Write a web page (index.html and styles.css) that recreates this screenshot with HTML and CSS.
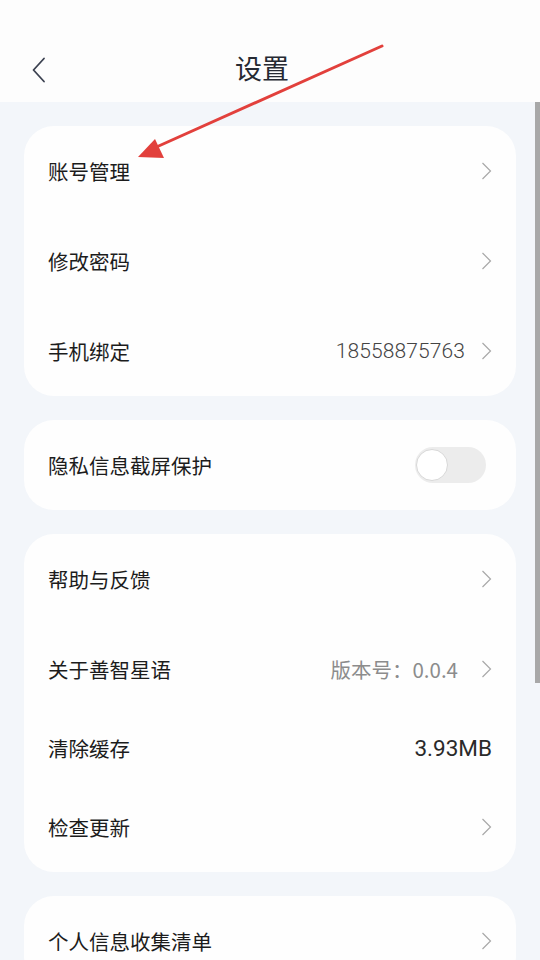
FILE: index.html
```html
<!DOCTYPE html>
<html lang="zh-CN">
<head>
    <meta charset="UTF-8">
    <meta name="viewport" content="width=device-width, initial-scale=1.0">
    <title>设置</title>
    <link rel="stylesheet" href="styles.css">
</head>
<body>
    <header class="top">
        <div class="bar">
            <svg class="back" width="16" height="26" viewBox="0 0 16 26">
                <path d="M13 1.5 L2.5 13 L13 24.5" fill="none" stroke="#3b4150" stroke-width="1.8" stroke-linecap="round" stroke-linejoin="round"/>
            </svg>
            <h1>设置</h1>
        </div>
    </header>
    <main class="list">
        <section class="card">
            <div class="row"><span class="label">账号管理</span><svg class="chev" width="11" height="18" viewBox="0 0 11 18"><path d="M1.5 1 L9.5 9 L1.5 17" fill="none" stroke="#a8a8a8" stroke-width="1.2"/></svg></div>
            <div class="row"><span class="label">修改密码</span><svg class="chev" width="11" height="18" viewBox="0 0 11 18"><path d="M1.5 1 L9.5 9 L1.5 17" fill="none" stroke="#a8a8a8" stroke-width="1.2"/></svg></div>
            <div class="row"><span class="label">手机绑定</span><span class="value num">18558875763</span><svg class="chev" width="11" height="18" viewBox="0 0 11 18"><path d="M1.5 1 L9.5 9 L1.5 17" fill="none" stroke="#a8a8a8" stroke-width="1.2"/></svg></div>
        </section>
        <section class="card">
            <div class="row"><span class="label">隐私信息截屏保护</span><span class="switch"><span class="knob"></span></span></div>
        </section>
        <section class="card">
            <div class="row"><span class="label">帮助与反馈</span><svg class="chev" width="11" height="18" viewBox="0 0 11 18"><path d="M1.5 1 L9.5 9 L1.5 17" fill="none" stroke="#a8a8a8" stroke-width="1.2"/></svg></div>
            <div class="row"><span class="label">关于善智星语</span><span class="value ver">版本号：0.0.4</span><svg class="chev" width="11" height="18" viewBox="0 0 11 18"><path d="M1.5 1 L9.5 9 L1.5 17" fill="none" stroke="#a8a8a8" stroke-width="1.2"/></svg></div>
            <div class="row short"><span class="label">清除缓存</span><span class="value size">3.93MB</span></div>
            <div class="row"><span class="label">检查更新</span><svg class="chev" width="11" height="18" viewBox="0 0 11 18"><path d="M1.5 1 L9.5 9 L1.5 17" fill="none" stroke="#a8a8a8" stroke-width="1.2"/></svg></div>
        </section>
        <section class="card">
            <div class="row"><span class="label">个人信息收集清单</span><svg class="chev" width="11" height="18" viewBox="0 0 11 18"><path d="M1.5 1 L9.5 9 L1.5 17" fill="none" stroke="#a8a8a8" stroke-width="1.2"/></svg></div>
        </section>
    </main>
    <div class="scroll"></div>
    <svg class="arrow" width="540" height="200" viewBox="0 0 540 200">
        <line x1="382" y1="46" x2="152" y2="149" stroke="#e2403c" stroke-width="3" stroke-linecap="round"/>
        <polygon points="138,157 155,139 164,158" fill="#e2403c"/>
    </svg>
</body>
</html>
```

FILE: styles.css
```css
html {
    font-family: "Noto Sans CJK SC", "Noto Sans", sans-serif;
}
body {
    margin: 0;
    background: #f3f6fa;
    color: #1c1c1c;
    position: relative;
    height: 960px;
    overflow: hidden;
}
.top {
    background: #fdfdfd;
    padding-top: 36px;
}
.bar {
    height: 66px;
    display: flex;
    align-items: center;
    justify-content: center;
    padding-right: 16px;
    position: relative;
}
.back {
    position: absolute;
    left: 31px;
    top: 21px;
}
h1 {
    margin: 0;
    font-size: 27px;
    font-weight: 400;
    color: #262a33;
    line-height: 1;
    position: relative;
    top: -2px;
}
.list {
    padding: 24px 24px 0;
    display: flex;
    flex-direction: column;
    gap: 24px;
}
.card {
    background: #fefefe;
    border-radius: 30px;
    padding: 0 24px;
}
.row {
    height: 90px;
    display: flex;
    align-items: center;
    font-size: 20.5px;
}
.row.short {
    height: 68px;
}
.label {
    flex: 1;
}
.value {
    color: #555;
}
.num {
    font-family: Roboto, sans-serif;
    font-weight: 300;
    font-size: 21px;
    letter-spacing: 0.1px;
    color: #444;
    margin-right: 16px;
}
.ver {
    color: #8c8c8c;
    font-size: 20.5px;
    margin-right: 23px;
}
.size {
    font-family: Roboto, sans-serif;
    font-size: 22.5px;
    color: #2a2a2a;
}
.chev {
    margin-right: 0;
}
.switch {
    width: 71px;
    height: 36px;
    border-radius: 18px;
    background: #ececec;
    margin-right: 6px;
    display: flex;
    align-items: center;
}
.knob {
    width: 32px;
    height: 32px;
    border-radius: 50%;
    background: #fff;
    border: 1px solid #d8d8d8;
    box-sizing: border-box;
    margin-left: 1px;
}
.scroll {
    position: absolute;
    left: 535px;
    top: 102px;
    width: 5px;
    height: 581px;
    background: #a8a8a8;
}
.arrow {
    position: absolute;
    left: 0;
    top: 0;
    pointer-events: none;
}
```
